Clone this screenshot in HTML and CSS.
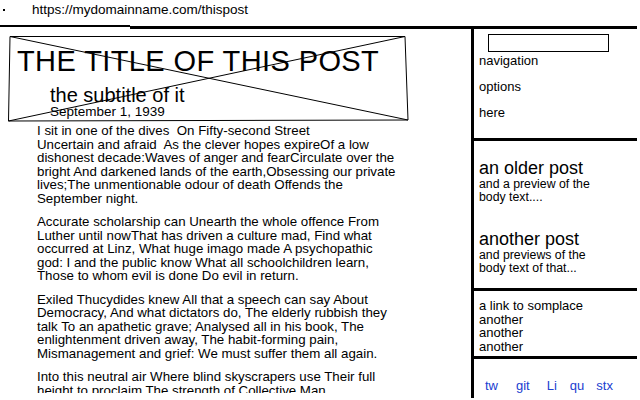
FILE: index.html
```html
<!DOCTYPE html>
<html lang="en">
<head>
<meta charset="utf-8">
<title>this post</title>
<link rel="stylesheet" href="styles.css">
</head>
<body>
<div class="topbar"><span class="dot"></span><span class="url">https://mydomainname.com/thispost</span></div>
<div class="rule"><span class="seg s1"></span><span class="seg s2"></span><span class="seg s3"></span></div>
<div class="layout">
  <main class="main">
    <header class="hero">
      <svg class="frame" width="401" height="86" viewBox="0 0 401 86">
        <polygon points="2,0.5 397,0.5 400,84 0.5,85" fill="none" stroke="#000" stroke-width="1"/>
        <line x1="2" y1="0.5" x2="400" y2="84" stroke="#000" stroke-width="1"/>
        <line x1="0.5" y1="85" x2="397" y2="0.5" stroke="#000" stroke-width="1"/>
      </svg>
      <h1 class="title">THE TITLE OF THIS POST</h1>
      <h2 class="subtitle">the subtitle of it</h2>
      <p class="date">September 1, 1939</p>
    </header>
    <article class="post-body">
      <p>I sit in one of the dives&nbsp; On Fifty-second Street<br>Uncertain and afraid&nbsp; As the clever hopes expireOf a low<br>dishonest decade:Waves of anger and fearCirculate over the<br>bright And darkened lands of the earth,Obsessing our private<br>lives;The unmentionable odour of death Offends the<br>September night.</p>
      <p>Accurate scholarship can Unearth the whole offence From<br>Luther until nowThat has driven a culture mad, Find what<br>occurred at Linz, What huge imago made A psychopathic<br>god: I and the public know What all schoolchildren learn,<br>Those to whom evil is done Do evil in return.</p>
      <p>Exiled Thucydides knew All that a speech can say About<br>Democracy, And what dictators do, The elderly rubbish they<br>talk To an apathetic grave; Analysed all in his book, The<br>enlightenment driven away, The habit-forming pain,<br>Mismanagement and grief: We must suffer them all again.</p>
      <p>Into this neutral air Where blind skyscrapers use Their full<br>height to proclaim The strength of Collective Man</p>
    </article>
  </main>
  <aside class="sidebar">
    <nav class="nav">
      <div class="search"></div>
      <a class="nav-link">navigation</a>
      <a class="nav-link">options</a>
      <a class="nav-link">here</a>
    </nav>
    <section class="posts">
      <div class="post">
        <h3 class="post-title">an older post</h3>
        <p class="post-preview">and a preview of the body text....</p>
      </div>
      <div class="post">
        <h3 class="post-title">another post</h3>
        <p class="post-preview">and previews of the body text of that...</p>
      </div>
    </section>
    <section class="links">
      <a class="link">a link to somplace</a>
      <a class="link">another</a>
      <a class="link">another</a>
      <a class="link">another</a>
    </section>
    <section class="social">
      <a class="soc soc-tw">tw</a>
      <a class="soc soc-git">git</a>
      <a class="soc soc-li">Li</a>
      <a class="soc soc-qu">qu</a>
      <a class="soc soc-stx">stx</a>
    </section>
  </aside>
</div>
</body>
</html>
```
FILE: styles.css
```css
* { box-sizing: border-box; }
html, body { margin: 0; padding: 0; background: #fff; }
body {
  font-family: "Liberation Sans", Arial, sans-serif;
  color: #000;
  width: 640px;
  height: 400px;
  overflow: hidden;
}
.topbar { display: flex; align-items: flex-start; height: 25px; }
.dot { display: block; width: 2px; height: 2px; background: #000; margin: 9px 0 0 3px; }
.url { margin-left: 27px; font-size: 13.5px; line-height: 20px; }

.rule { display: flex; align-items: flex-start; width: 637px; height: 4px; }
.seg { display: block; background: #000; height: 3px; }
.s1 { width: 130px; height: 2px; }
.s2 { width: 258px; margin-top: 1px; }
.s3 { flex: 1; margin-top: 1px; }

.layout { display: flex; align-items: flex-start; }
.main { width: 471px; height: 364px; overflow: hidden; }

.hero {
  position: relative;
  width: 401px;
  height: 86px;
  margin: 7px 0 0 8px;
  padding: 9px 0 0 9px;
}
.frame { position: absolute; left: 0; top: 0; overflow: visible; }
.title { margin: 0; font-size: 29px; line-height: 33px; font-weight: 400; letter-spacing: 0.4px; }
.subtitle { margin: 7px 0 0 33px; font-size: 20px; line-height: 20px; font-weight: 400; }
.date { margin: 0 0 0 33px; font-size: 13.5px; line-height: 13px; }

.post-body { margin: 2px 0 0 37px; width: 420px; font-size: 13.3px; line-height: 13.5px; white-space: nowrap; }
.post-body p { margin: 0 0 10px; }

.sidebar { width: 166px; height: 371px; border-left: 3px solid #000; margin-top: -2px; padding-top: 2px; }
.nav { padding: 5px 0 17px 5px; border-bottom: 3px solid #000; }
.search { width: 121px; height: 18px; border: 1px solid #000; margin-left: 9px; }
.nav-link { display: block; font-size: 13px; line-height: 16px; margin-top: 10px; }
.search + .nav-link { margin-top: 1px; }

.posts { padding: 17px 0 13px 5px; border-bottom: 3px solid #000; }
.post + .post { margin-top: 25px; }
.post-title { margin: 0; font-size: 18px; line-height: 20px; font-weight: 400; }
.post-preview { margin: 0; max-width: 130px; font-size: 12.3px; line-height: 13px; }

.links { padding: 8px 0 3px 5px; border-bottom: 3px solid #000; }
.link { display: block; font-size: 13px; line-height: 13.5px; }

.social { display: flex; padding: 19px 0 0 11px; font-size: 13px; line-height: 16px; }
.soc { color: #2040d0; }
.soc-git { margin-left: 18px; }
.soc-li { margin-left: 17px; }
.soc-qu { margin-left: 13px; }
.soc-stx { margin-left: 12px; }
```
